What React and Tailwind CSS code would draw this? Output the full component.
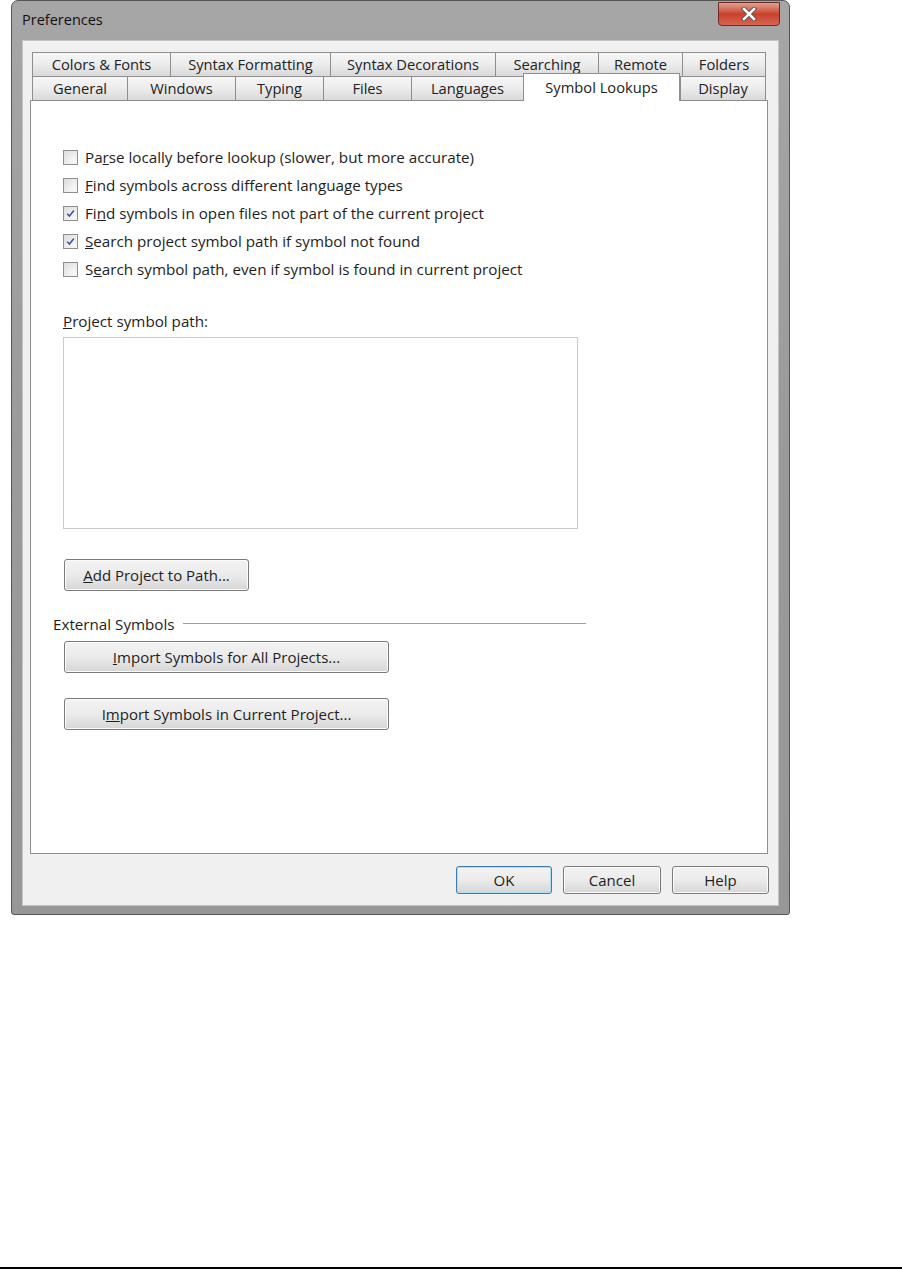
import { useState } from "react";

const font = "font-['Open_Sans','Noto_Sans',sans-serif]";

const rowOne = [
  ["Colors & Fonts", "w-[138px]"],
  ["Syntax Formatting", "w-[160px]"],
  ["Syntax Decorations", "w-[165px]"],
  ["Searching", "w-[103px]"],
  ["Remote", "w-[84px]"],
  ["Folders", "w-[84px]"],
];

const rowTwo = [
  ["General", "w-[95px]"],
  ["Windows", "w-[108px]"],
  ["Typing", "w-[88px]"],
  ["Files", "w-[88px]"],
  ["Languages", "w-[112px]"],
  ["Symbol Lookups", "w-[157px]"],
  ["Display", "w-[86px]"],
];

function Tab({ label, width, active, onClick, last }) {
  if (active) {
    return (
      <div
        onClick={onClick}
        className={`${width} h-[28px] -mb-px relative z-10 bg-white border border-b-0 border-[#8e8e8e] flex items-start justify-center pt-[2px] text-[14.7px] font-medium text-[#1c1c1c] cursor-default`}
      >
        {label}
      </div>
    );
  }
  return (
    <div
      onClick={onClick}
      className={`${width} h-[24px] border-t border-l ${last ? "border-r" : ""} border-[#8e8e8e] bg-gradient-to-b from-[#f6f6f6] via-[#ececec] to-[#d9d9d9] flex items-center justify-center text-[14.7px] font-medium text-[#222] cursor-default`}
    >
      {label}
    </div>
  );
}

function Check({ checked, onChange, children }) {
  return (
    <label className="h-[28px] flex items-center gap-[7px] cursor-default">
      <span
        onClick={onChange}
        className="w-[15px] h-[15px] border border-[#8f8f8f] bg-gradient-to-br from-[#dedede] to-[#f8f8f8] p-[2px] flex items-center justify-center"
      >
        <span className="w-full h-full bg-gradient-to-br from-[#e0e0e0] to-[#fbfbfb] flex items-center justify-center">
          {checked && (
            <svg width="11" height="11" viewBox="0 0 11 11">
              <path d="M1.5 5.8 L4.2 8.6 L9.6 1.8" fill="none" stroke="#3552a6" strokeWidth="1.8" />
            </svg>
          )}
        </span>
      </span>
      <span className="text-[15.2px] font-medium text-[#1e1e1e]">{children}</span>
    </label>
  );
}

function Btn({ children, className = "", focus }) {
  return (
    <button
      className={`${className} border rounded-[3px] ${
        focus ? "border-[#3d7bad] shadow-[inset_0_0_0_1px_#aee0f5]" : "border-[#7a7a7a] shadow-[inset_0_0_0_1px_#fcfcfc]"
      } bg-gradient-to-b from-[#f3f3f3] via-[#ebebeb] to-[#d6d6d6] text-[15px] font-medium text-[#1e1e1e] flex items-center justify-center`}
    >
      {children}
    </button>
  );
}

export default function App() {
  const [tab, setTab] = useState("Symbol Lookups");
  const [checks, setChecks] = useState([false, false, true, true, false]);

  const toggle = (i) => setChecks(checks.map((c, j) => (j === i ? !c : c)));

  const labels = [
    <>Pa<u>r</u>se locally before lookup (slower, but more accurate)</>,
    <><u>F</u>ind symbols across different language types</>,
    <>Fi<u>n</u>d symbols in open files not part of the current project</>,
    <><u>S</u>earch project symbol path if symbol not found</>,
    <>S<u>e</u>arch symbol path, even if symbol is found in current project</>,
  ];

  return (
    <div className={`w-[902px] h-[1269px] bg-white border-b-2 border-black ${font}`}>
      <div className="ml-[11px] w-[779px] h-[915px] rounded-t-[7px] rounded-b-[3px] border border-[#555] bg-gradient-to-b from-[#a6a6a6] via-[#9a9a9a] to-[#979797] flex flex-col">
        <div className="h-[39px] flex items-start justify-between pl-[10px] pr-[9px]">
          <span className="mt-[8px] text-[14.5px] font-medium text-[#111]">Preferences</span>
          <div className="mt-[1px] w-[62px] h-[24px] rounded-b-[4px] border border-[#6b2a22] bg-gradient-to-b from-[#e2a090] via-[#c7412e] to-[#d9644f] flex items-center justify-center">
            <svg width="16" height="14" viewBox="0 0 16 14">
              <path d="M3 2 L13 12 M13 2 L3 12" stroke="#4b4b4b" strokeWidth="4.2" strokeLinecap="square" />
              <path d="M3 2 L13 12 M13 2 L3 12" stroke="#fff" strokeWidth="2.6" strokeLinecap="square" />
            </svg>
          </div>
        </div>

        <div className="mx-[10px] mb-[8px] flex-1 bg-[#f0f0f0] border border-[#c4c4c4] pt-[11px] pl-[7px] pr-[11px] flex flex-col">
          <div className="ml-[2px] w-[734px]">
            <div className="flex h-[24px]">
              {rowOne.map(([l, w], i) => (
                <Tab key={l} label={l} width={w} last={i === rowOne.length - 1} active={tab === l} onClick={() => setTab(l)} />
              ))}
            </div>
            <div className="flex items-end h-[24px]">
              {rowTwo.map(([l, w], i) => (
                <Tab key={l} label={l} width={w} last={i === rowTwo.length - 1} active={tab === l} onClick={() => setTab(l)} />
              ))}
            </div>
          </div>

          <div className="w-[738px] h-[754px] bg-white border border-[#8e8e8e] pt-[42px] pl-[32px]">
            <div className="flex flex-col">
              {labels.map((l, i) => (
                <Check key={i} checked={checks[i]} onChange={() => toggle(i)}>
                  {l}
                </Check>
              ))}
            </div>

            <div className="mt-[28px] h-[20px] flex items-center text-[15.2px] font-medium text-[#1e1e1e]">
              <span><u>P</u>roject symbol path:</span>
            </div>
            <textarea className="mt-[6px] w-[515px] h-[192px] border border-[#c7cbd1] resize-none outline-none block" />

            <Btn className="mt-[30px] ml-[1px] w-[185px] h-[32px]">
              <span><u>A</u>dd Project to Path...</span>
            </Btn>

            <div className="-ml-[10px] mt-[23px] w-[533px] h-[20px] flex items-center gap-[8px]">
              <span className="text-[15.2px] font-medium text-[#1e1e1e]">External Symbols</span>
              <div className="flex-1 h-[2px] border-t border-[#a0a0a0] border-b border-b-white" />
            </div>
            <Btn className="mt-[7px] ml-[1px] w-[325px] h-[32px]">
              <span><u>I</u>mport Symbols for All Projects...</span>
            </Btn>
            <Btn className="mt-[25px] ml-[1px] w-[325px] h-[32px]">
              <span>I<u>m</u>port Symbols in Current Project...</span>
            </Btn>
          </div>

          <div className="mt-[12px] -mr-[2px] flex justify-end gap-[11px]">
            <Btn focus className="w-[96px] h-[28px]">OK</Btn>
            <Btn className="w-[98px] h-[28px]">Cancel</Btn>
            <Btn className="w-[97px] h-[28px]">Help</Btn>
          </div>
        </div>
      </div>
    </div>
  );
}
